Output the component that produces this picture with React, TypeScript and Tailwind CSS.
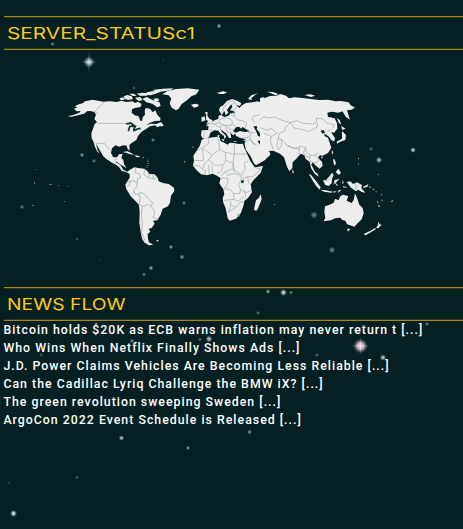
import React from "react";

const headlines = [
  "Bitcoin holds $20K as ECB warns inflation may never return t [...]",
  "Who Wins When Netflix Finally Shows Ads [...]",
  "J.D. Power Claims Vehicles Are Becoming Less Reliable [...]",
  "Can the Cadillac Lyriq Challenge the BMW iX? [...]",
  "The green revolution sweeping Sweden [...]",
  "ArgoCon 2022 Event Schedule is Released [...]",
];

// x, y, radius, opacity
const stars: number[][] = [
  [219, 26, 1.9, 0.7], [52.5, 44, 1.8, 0.5], [163, 60, 1.3, 0.12], [82, 155, 1.9, 0.6],
  [94, 161, 1.8, 0.45], [153, 140, 1.7, 0.5], [134, 88, 1.6, 0.3], [184, 203, 1.7, 0.45],
  [22, 207, 1.9, 0.45], [77, 239, 1.5, 0.3], [171, 247, 1.8, 0.65], [182, 257, 2, 0.6],
  [151, 268, 2, 0.65], [144, 274.5, 1.6, 0.5], [413, 150, 2.2, 0.9], [371, 149, 1.8, 0.35],
  [379, 160, 2.5, 0.8], [314, 215, 2.9, 0.5], [332, 250, 2.7, 0.5], [268, 291.5, 1.9, 0.65],
  [283.5, 292.5, 2.7, 0.95], [291, 292.5, 1.6, 0.5], [258, 313, 1.7, 0.4], [427, 324, 1.7, 0.5],
  [209, 339, 2.7, 0.85], [200, 339.5, 1.6, 0.4], [132, 341, 1.9, 0.55], [383, 357.5, 2.5, 0.85],
  [317, 355, 1.6, 0.4], [41, 355, 1.6, 0.3], [121.5, 438, 2.1, 0.85], [188, 448, 1.8, 0.6],
  [249.5, 432, 1.9, 0.6], [77, 477.5, 1.6, 0.35], [9, 483, 1.4, 0.2], [13.5, 513.5, 2.7, 1],
  [55, 306, 1.5, 0.3], [100, 260, 1.5, 0.12],
];

function Starfield() {
  return (
    <svg className="pointer-events-none absolute inset-0" width="463" height="529" viewBox="0 0 463 529" aria-hidden="true">
      <defs>
        <radialGradient id="star">
          <stop offset="0" stopColor="#eef4fa" />
          <stop offset="0.35" stopColor="#c7d6de" stopOpacity="0.85" />
          <stop offset="1" stopColor="#7b949c" stopOpacity="0" />
        </radialGradient>
        <radialGradient id="pink">
          <stop offset="0" stopColor="#fff3fb" />
          <stop offset="0.4" stopColor="#e6cfe0" stopOpacity="0.9" />
          <stop offset="1" stopColor="#80677a" stopOpacity="0" />
        </radialGradient>
      </defs>
      {stars.map(([x, y, r, o]) => (
        <circle key={`${x}-${y}`} cx={x} cy={y} r={r * 1.35} opacity={o} fill="url(#star)" />
      ))}
      <g fill="url(#star)">
        <circle cx="89" cy="62" r="5.6" />
        <ellipse cx="89" cy="62" rx="9" ry="1.3" opacity=".45" />
        <ellipse cx="89" cy="62" rx="1.3" ry="12" opacity=".35" />
      </g>
      <g fill="url(#pink)">
        <circle cx="360.5" cy="346" r="7.5" />
        <ellipse cx="360.5" cy="346" rx="10" ry="1.6" opacity=".45" />
        <ellipse cx="360.5" cy="346" rx="1.6" ry="10" opacity=".45" />
      </g>
    </svg>
  );
}

function WorldMap() {
  return (
    <svg className="block" width="463" height="170" viewBox="0 80 463 170" role="img" aria-label="World map">
      {/* North America */}
      <g transform="translate(60 80) scale(.33333)" fill="#ededed">
        <path d="M22 109 40 105 58 98 62 93 50 94 42 86 52 82 44 79 56 73 68 70 75 64 98 59 130 65 150 64 170 66 184 62 200 66 218 64 225 69 234 65 245 72 242 81 224 84 216 88 215 98 224 106 236 109 241 122 246 123 248 112 255 104 254 92 257 84 270 86 278 97 286 91 292 105 302 115 300 122 285 123 270 128 259 136 273 131 288 132 303 127 305 136 292 142 285 136 270 139 257 148 248 153 241 160 234 168 229 180 216 188 208 195 209 212 203 207 200 197 190 196 178 200 166 196 156 205 153 219 160 232 171 232 178 222 188 222 184 234 190 240 192 253 200 265 209 270 180 253 170 245 158 247 142 239 130 229 121 214 108 191 113 211 119 220 112 215 105 201 101 187 95 175 94 160 99 146 104 132 111 126 103 117 108 104 103 96 91 93 81 94 72 101 54 106 35 110Z" />
        <path d="M191 49 202 45 215 49 219 57 206 60 194 57ZM178 55 190 52 194 59 183 61ZM208 41 222 41 230 47 218 48ZM230 41 248 38 268 42 260 47 240 47ZM225 53 241 51 248 61 235 63ZM247 56 260 51 279 61 298 65 302 78 292 82 277 71 259 67ZM250 43 264 36 286 32 276 30 308 26 340 25 331 31 302 35 285 42 270 46ZM280 56 294 55 297 62 287 65Z" />
        <path d="M307 43 322 33 348 27 384 25 418 29 409 43 394 49 379 62 365 72 356 86 348 91 335 83 329 70 334 56 326 46Z" />
        <path d="M304 126 311 137 302 140ZM187 216 203 214 223 224 211 223 198 218ZM223 226 236 227 241 231 230 232ZM247 231 253 233 250 235Z" />
        <path d="M261 239l4 3-1 14-4 8" fill="none" stroke="#cbd0cf" strokeWidth="2" strokeDasharray="3 3" />
      </g>
      <g transform="translate(60 80) scale(.33333)" fill="none" stroke="#9aa8a6" strokeWidth="2.2">
        <path d="M134 65 104 95 113 100M113 130H200L213 136M107 190 121 190 134 191 143 202 151 211M158 247 166 238 171 237" />
        <path d="M198 132 212 129 222 136 209 140 205 154M216 139 226 139 220 151M220 153 232 147 242 145" stroke="#153335" strokeWidth="5" />
      </g>
      {/* South America */}
      <g transform="translate(110 150) scale(.33333)">
        <path fill="#ededed" d="M0 13 8 32 20 38 31 45 40 59 52 65 60 59 73 52 84 54 103 56 112 63 118 72 134 73 143 83 146 94 159 99 176 102 192 113 193 123 183 137 180 158 174 169 158 176 152 194 142 211 129 212 134 221 125 234 116 236 121 245 113 252 114 267 117 277 130 284 117 286 104 278 96 266 92 246 88 218 89 187 87 164 74 151 62 139 49 117 46 104 53 92 59 83 59 72 48 66 36 63 27 51 18 44 2 36 -8 26Z" />
        <path fill="none" stroke="#9aa8a6" strokeWidth="2.2" d="M78 52 75 67 90 73 92 83 82 87 82 98 68 91 62 93 48 99M62 93 57 108 51 108M82 98 80 111 70 120 75 132 87 133 90 127 104 132 116 148 128 158 122 169 132 180 134 192 129 202 144 208M87 133 91 144 88 164 99 170 115 163 122 169M97 171 94 195 97 220 94 246 105 272M115 67 119 84 130 87 142 83M105 57 101 73 117 85M128 84 131 74" />
        <path fill="#ededed" d="M138 271 147 271 142 275Z" />
      </g>
      {/* Europe and western Asia */}
      <g transform="translate(180 80) scale(.33333)">
        <path fill="#ededed" d="M117 91 120 81 128 77 141 63 156 57 172 62 184 70 180 78 169 75 178 84 188 74 198 69 218 67 233 64 246 68 260 71 270 61 282 54 292 60 303 48 303 214 281 211 268 203 250 199 238 181 233 184 245 201 250 208 256 204 269 216 271 224 254 241 228 256 221 249 212 229 198 210 194 193 197 177 181 174 169 168 165 161 160 166 151 158 154 174 147 174 139 161 126 151 121 148 126 156 139 169 133 178 132 168 121 160 115 152 103 151 91 158 87 171 75 177 67 174 63 166 65 151 84 150 86 139 77 136 90 130 101 122 115 116 116 107 125 104 120 96Z" />
        <path fill="#042022" d="M137 106 145 98 141 90 149 79 154 73 157 81 150 91 164 94 151 99 148 106 135 111 125 107 130 97 134 94ZM159 153 168 142 177 140 184 146 187 141 199 148 210 154 195 156 180 153 167 158ZM220 139 232 139 230 147 238 157 244 171 234 168 228 153ZM153 98 166 95 163 99 152 101Z" />
        <path fill="#ededed" d="M33 74 46 71 57 74 53 80 42 83ZM75 96 83 97 82 106 88 116 98 121 94 129 79 132 84 124 77 117 79 108ZM64 112 74 109 76 121 65 126ZM112 38 129 34 142 37 132 42 118 42ZM204 57 214 46 235 39 226 44 214 54 216 60ZM123 178 133 178 131 184ZM113 165 118 165 117 173 113 173ZM160 183 173 184 164 186ZM190 181 198 178 195 183Z" />
        <path fill="none" stroke="#9aa8a6" strokeWidth="2" d="M129 99 130 83 147 66 157 63 166 66M157 72 165 69 171 82 160 91M165 94 163 108 172 120 188 122 200 130 195 143M153 107 164 108M121 117 116 128 103 132 114 141 121 141 123 151M92 131 103 132M86 149 99 151M75 151 71 173M121 117 139 113 154 118 158 130 149 137 128 134 116 128M121 141 128 134 142 142 154 149 164 149M137 143 143 158 157 155M150 136 157 134 169 140M202 150 214 161 205 173 188 174M205 158 224 158M210 170 215 188 231 197M194 187 211 178 227 194M226 127 216 120 220 109 243 103 260 110 276 108 303 125M240 151 257 146 275 160 303 151M244 172 263 174 280 183 292 176 303 179M280 183 281 211M263 174 268 203M275 160 292 176" />
      </g>
      {/* Africa */}
      <g transform="translate(180 130) scale(.33333)">
        <path fill="#ededed" d="M65 29 81 24 112 20 120 24 121 33 133 38 143 44 149 38 162 39 177 42 189 41 192 52 203 75 211 93 224 112 249 108 242 128 220 151 212 163 216 187 204 204 193 213 191 225 183 248 168 266 149 272 143 265 137 235 130 218 128 204 133 193 130 178 118 160 122 145 111 137 98 131 80 136 63 133 50 121 39 107 42 91 40 77 50 62 59 48Z" />
        <path fill="#ededed" d="M242 193 245 208 236 230 230 242 222 240 224 228 228 211 236 204ZM36 50h5l-2 3zM12 94h4l-2 4zM282 222h4l-3 3z" />
        <path fill="none" stroke="#9aa8a6" strokeWidth="2" d="M84 25 87 39 67 53 52 62M68 55 96 75 119 59 117 39 113 23M119 59 136 67 163 72 163 41M163 72H201M136 67 137 91 129 105 106 106 86 90 96 75M67 56 71 91 43 92M86 90 74 100 67 117 58 108 43 106M67 117 77 123 75 135M86 105 88 134M97 106 97 131M129 105 124 124 111 131M137 91 160 101 158 116 134 126 124 138M163 72 159 96 163 121 186 134 196 115 192 100 204 93M158 116 163 125M134 126 144 136 163 130 182 136 185 147 203 140 217 140 228 133 242 117 224 112M120 145 144 144 142 162 132 176 151 179 161 191 180 190 181 178 176 164 184 148M203 140 205 155 212 165M181 178 198 188 215 181M194 180 197 203M161 191 161 208 132 211M161 208 175 213 191 200M153 213 151 232 145 246M153 225 168 232 180 216 191 216M168 232 155 241 145 246M174 251l6 3-4 6-5-3z" />
        <path fill="#153335" d="M184 151 192 151 190 160 183 158Z" />
      </g>
      {/* Northern and eastern Asia */}
      <g transform="translate(260 80) scale(.33333)">
        <path fill="#ededed" d="M0 54 12 52 20 66 13 55 30 48 49 47 61 42 78 47 87 55 104 52 128 54 158 58 178 60 205 59 226 64 243 63 266 67 272 76 285 83 274 89 261 91 270 119 258 111 247 94 235 98 217 95 202 98 204 110 224 115 231 130 232 146 222 158 213 157 225 174 223 184 214 181 207 170 194 161 193 168 204 173 209 188 214 203 204 219 188 227 179 226 174 234 186 245 188 257 179 266 166 256 158 246 154 254 165 275 173 281 176 290 164 281 153 264 149 245 137 237 133 226 122 221 109 236 98 247 97 265 88 274 81 260 72 232 60 221 40 212 23 213 0 209Z" />
        <path fill="#ededed" d="M22 35 39 36 55 42 47 46 31 39ZM133 45 151 43 166 47 153 51ZM231 114 239 120 244 134 236 128ZM243 137 257 146 247 150ZM246 153 258 165 256 180 241 185 231 191 230 185 246 176ZM215 211 220 216 216 225ZM183 230 189 230 185 236ZM219 237 225 240 224 256ZM97 268 102 276 98 279Z" />
        <path fill="#042022" d="M182 152 191 150 195 158 187 161Z" />
        <path fill="none" stroke="#9aa8a6" strokeWidth="2.1" d="M0 121 10 110 27 114 45 111 63 120 75 124 91 128 111 122 129 130 157 132 171 126 168 114 188 117 201 130 224 134 218 145M91 128 103 144 128 149 145 155 171 142 173 129M91 128 76 143 74 153 58 160 55 174 70 183 83 199 106 204 123 199 137 203 139 215 151 226 163 226 175 220M0 143 22 151 33 145 52 160 34 169 12 160M34 169 31 184 40 209M55 174 50 197 58 209M64 178 66 195 55 208M83 195 98 205 119 207M119 202 116 224M137 203 130 219 141 232 151 226 148 238 158 249 171 248 178 236 163 226M201 154 211 151" />
      </g>
      {/* South-east Asia and Oceania */}
      <g transform="translate(290 140) scale(.33333)" fill="#ededed">
        <path d="M56 101 64 106 78 123 92 142 89 149 78 137 67 120ZM91 149 107 151 129 155 124 158 102 155ZM99 121 108 120 119 108 126 98 131 105 126 117 125 130 116 138 105 134ZM134 120 149 116 142 123 137 128 145 137 139 136 135 128 130 135ZM170 126 181 124 189 132 201 127 216 135 214 144 226 158 215 156 205 149 198 154 183 143ZM132 57 138 67 135 78 130 68ZM145 86 153 98 147 105 137 96ZM132 153 141 155 130 158ZM145 151 154 149 145 158ZM158 119 161 129 157 132ZM159 139l11 2-1 2-10-1z" />
        <path d="M105 199 119 194 131 188 135 177 146 180 151 169 159 164 175 168 170 182 185 189 191 180 195 160 202 176 208 194 218 204 221 220 215 238 203 250 193 260 180 256 171 253 166 242 157 240 151 233 135 235 123 241 101 244 106 234 103 215ZM171 266 181 266 174 275ZM265 245 269 253 275 254 265 265 258 263 263 257ZM221 282 242 272 255 264 258 267 243 277 226 286Z" />
        <path d="M218 141 235 133 232 140 222 143ZM237 139l6 2-3 3zM247 145l7 4-3 2zM257 153l4 3-3 1zM274 160l3 7-3-2zM261 180l5 10-3-1zM263 195l8 3-4 3zM276 178l2 6-3-1zM303 184l7-4-4 6zM7 91 11 98 9 101ZM204 54h2v4h-2zM204 71h2v3h-2zM265 102h2v3h-2z" />
        <path d="M198 128V151M102 123 116 120 125 109" fill="none" stroke="#9aa8a6" strokeWidth="2.2" />
      </g>
      <path fill="#b9c6c5" opacity=".5" d="M34 182h1v2h-1zM35 169h1v1h-1zM49 184h3v1h-3zM58 185h1v1h-1zM68 186h1v1h-1zM64 201h1v1h-1zM32 205h2v1h-2z" />
    </svg>
  );
}

function SectionTitle({ children, scale }: { children: React.ReactNode; scale: string }) {
  return (
    <h2 className="ml-1 flex h-[34px] items-center border-y border-[#a78813] pl-[3px] pt-px shadow-[inset_0_1px_#303818,inset_0_-1px_#303818]">
      <span className={`origin-left whitespace-pre font-['Inter',sans-serif] text-[16.5px] leading-none text-[#fbc91b] ${scale}`}>
        {children}
      </span>
    </h2>
  );
}

export default function App() {
  return (
    <main className="relative h-[529px] w-[463px] overflow-hidden bg-[#042022] pt-4">
      <Starfield />
      <section className="relative h-[271px]">
        <SectionTitle scale="scale-x-[1.26]">SERVER_STATUSc1</SectionTitle>
        <div className="pt-[30px]"><WorldMap /></div>
      </section>
      <section className="relative">
        <SectionTitle scale="scale-x-[1.17]">NEWS FLOW</SectionTitle>
        <ul className="pl-[3.4px] font-['Roboto',sans-serif] text-[12.3px] font-medium leading-[18px] tracking-[1.02px] text-white">
          {headlines.map((headline) => (
            <li key={headline} className="whitespace-nowrap">{headline}</li>
          ))}
        </ul>
      </section>
    </main>
  );
}
